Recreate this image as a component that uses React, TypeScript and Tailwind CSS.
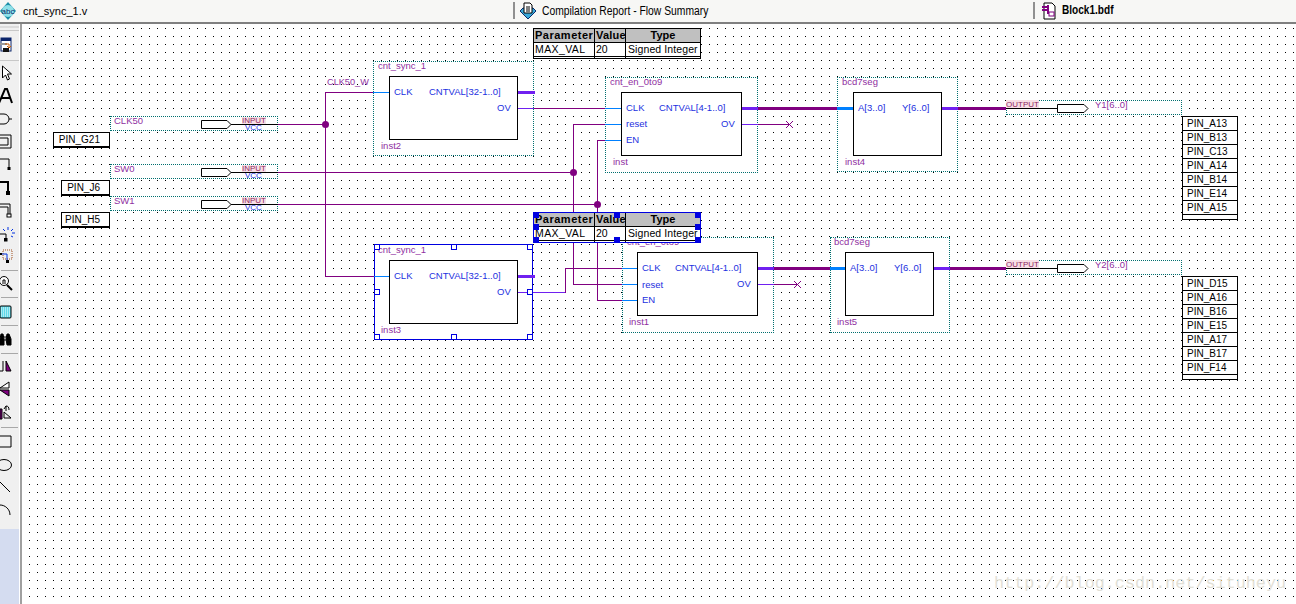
import type { ReactNode } from "react";

const PURPLE = "#800080";
const BLUE = "#0080ff";
const VIOLET = "#7020f0";

const labelClass = "absolute whitespace-nowrap text-[9.5px] leading-[12px] text-[#8f2f9f]";
const portClass = "absolute whitespace-nowrap text-[9.5px] leading-[12px] text-[#1c30e0]";

function Hline({ x1, x2, y, color = PURPLE, w = 1 }: { x1: number; x2: number; y: number; color?: string; w?: number }) {
  return <line x1={x1} x2={x2} y1={y + 0.5} y2={y + 0.5} stroke={color} strokeWidth={w} />;
}

function Vline({ x, y1, y2, color = PURPLE }: { x: number; y1: number; y2: number; color?: string }) {
  return <line x1={x + 0.5} x2={x + 0.5} y1={y1} y2={y2} stroke={color} strokeWidth={1} />;
}

function PinShape({ x, y, w = 30 }: { x: number; y: number; w?: number }) {
  return (
    <polygon
      points={`${x + 0.5},${y + 0.5} ${x + w - 4},${y + 0.5} ${x + w},${y + 4.5} ${x + w - 4},${y + 8.5} ${x + 0.5},${y + 8.5}`}
      fill="#fff"
      stroke="#000"
    />
  );
}

function Cross({ x, y }: { x: number; y: number }) {
  return <path d={`M${x - 3} ${y - 3}L${x + 4} ${y + 4}M${x + 4} ${y - 3}L${x - 3} ${y + 4}`} stroke={PURPLE} fill="none" />;
}

function PinBox({ className, name }: { className: string; name: string }) {
  return (
    <div className={`absolute box-border h-[16px] border border-b-2 border-black bg-white pr-[9px] text-right text-[10px] leading-[13px] text-black ${className}`}>
      {name}
    </div>
  );
}

function PinList({ className, pins }: { className: string; pins: string[] }) {
  return (
    <div className={`absolute flex w-[56px] flex-col border-x border-t border-black bg-white ${className}`}>
      {pins.map((p) => (
        <div key={p} className="h-[14px] border-b border-black pl-[4px] text-[10px] leading-[13px] text-black">
          {p}
        </div>
      ))}
      <div className="h-[5px] border-b border-black" />
    </div>
  );
}

function ParamTable({ className, selected, children }: { className: string; selected?: boolean; children?: ReactNode }) {
  const line = selected ? "border-[#0000e0]" : "border-black";
  return (
    <div className={`absolute w-[168px] border bg-white text-black ${line} ${className}`}>
      <div className="grid h-[13px] grid-cols-[61px_31px_74px] bg-[#c0c0c0] text-[11px] font-bold leading-[13px]">
        <div className="whitespace-nowrap border-r border-black pl-[1px] tracking-[0.5px]">Parameter</div>
        <div className="whitespace-nowrap border-r border-black pl-[1px] tracking-[0.2px]">Value</div>
        <div className="text-center">Type</div>
      </div>
      <div className="grid h-[14px] grid-cols-[61px_31px_74px] border-t border-black text-[10.5px] leading-[13px]">
        <div className="border-r border-black pl-[1px] tracking-[0.4px]">MAX_VAL</div>
        <div className="border-r border-black pl-[1px]">20</div>
        <div className="relative z-10 whitespace-nowrap pl-[2px] tracking-[0.1px]">Signed Integer</div>
      </div>
      <div className="grid h-[2px] grid-cols-[61px_31px_74px] border-t border-black">
        <div className="border-r border-black" />
        <div className="border-r border-black" />
      </div>
      {children}
    </div>
  );
}

function IoFrame({ className, name, output }: { className: string; name: string; output?: boolean }) {
  return (
    <div className={`absolute h-[15px] border border-dotted border-[#006f6f] bg-white ${className}`}>
      <span className={`absolute top-[-2px] whitespace-nowrap text-[9.5px] leading-[12px] text-[#8f2f9f] ${output ? "left-[88px]" : "left-[3px]"}`}>{name}</span>
      {output ? (
        <span className="absolute left-[-1px] top-[-1px] bg-[#f8dfe6] text-[8px] leading-[9px] text-[#8f1f5f]">OUTPUT</span>
      ) : (
        <>
          <span className="absolute left-[131px] top-[0px] bg-[#f8dfe6] text-[8px] leading-[7px] text-[#8f1f5f]">INPUT</span>
          <span className="absolute left-[134px] top-[7px] text-[8px] leading-[8px] text-[#1c30e0]">VCC</span>
        </>
      )}
    </div>
  );
}

function Handle({ className, solid }: { className: string; solid?: boolean }) {
  return <div className={`absolute h-[6px] w-[6px] border border-[#0000e0] ${solid ? "bg-[#0000e0]" : "bg-white"} ${className}`} />;
}

function ToolRow({ children, h = "h-[23px]" }: { children: ReactNode; h?: string }) {
  return (
    <div className={`flex shrink-0 items-center ${h}`}>
      <svg width="19" height="18" viewBox="0 0 19 18" fill="none" stroke="#000">
        {children}
      </svg>
    </div>
  );
}

function Sep() {
  return <div className="mx-px h-px shrink-0 bg-[#a8a8a8]" />;
}

function Toolbar() {
  return (
    <div className="flex w-[19px] shrink-0 flex-col bg-[#f0f0f0]">
      <div className="flex h-[12px] shrink-0 flex-col gap-[2px] pt-[2px]">
        <div className="h-[2px] bg-[#dcdcdc]" />
        <div className="h-[1px] bg-[#c8c8c8]" />
      </div>
      <ToolRow h="h-[17px]">
        <rect x="1" y="2" width="10" height="13" fill="#fff" stroke="#0a246a" />
        <rect x="1" y="2" width="10" height="3" fill="#0a246a" stroke="none" />
        <path d="M0 8h7" stroke="#9a9a9a" strokeWidth="2" />
        <path d="M5 8h4v3M7 10l2 2 2-2" stroke="#c85a00" />
        <rect x="3" y="12" width="6" height="4" fill="#111" stroke="none" />
      </ToolRow>
      <div className="h-[7px] shrink-0" />
      <div className="h-px shrink-0 bg-[#c8c8c8]" />
      <ToolRow>
        <path d="M2.5 2v12l3-3 2 5 2-1-2-5h4z" fill="#fff" />
      </ToolRow>
      <ToolRow>
        <path d="M-1 16L5 2h2l5 14M1 11h9" strokeWidth="2" />
      </ToolRow>
      <ToolRow>
        <path d="M0 4h4a5 5 0 0 1 0 10H0M9 9h3" />
      </ToolRow>
      <ToolRow>
        <path d="M0 2h11v13H0M0 5h8v7H0" />
      </ToolRow>
      <ToolRow>
        <path d="M0 3h9v9" />
        <rect x="7.5" y="11" width="3" height="3" fill="#000" stroke="none" />
      </ToolRow>
      <ToolRow>
        <path d="M0 3h8v10" strokeWidth="2" />
        <rect x="6" y="12" width="4" height="4" fill="#000" stroke="none" />
      </ToolRow>
      <ToolRow>
        <path d="M0 2h10v11H8V5H0" fill="none" />
        <rect x="7" y="12" width="4" height="3" fill="#fff" />
      </ToolRow>
      <ToolRow>
        <path d="M3 4l2 2M8 2v3M13 4l-2 2M12 8h3M11 11l2 1" stroke="#0030e0" />
        <path d="M0 9h6v5" />
        <rect x="4" y="13" width="3.5" height="3.5" fill="#000" stroke="none" />
      </ToolRow>
      <ToolRow>
        <rect x="3" y="2" width="9" height="9" stroke="#a05020" strokeDasharray="1 1" />
        <path d="M0 6h7v6" stroke="#0030e0" />
        <rect x="0" y="5" width="2" height="2" fill="#000" stroke="none" />
        <rect x="6" y="12" width="3" height="3" fill="#000" stroke="none" />
      </ToolRow>
      <div className="h-[2px] shrink-0" />
      <Sep />
      <ToolRow h="h-[26px]">
        <circle cx="4" cy="6" r="4.5" fill="#fff" />
        <path d="M2 6h4M4 4v2M2 8h4" />
        <path d="M7 10l5 5" strokeWidth="2" />
      </ToolRow>
      <Sep />
      <ToolRow h="h-[27px]">
        <rect x="0" y="3" width="11" height="12" rx="1" fill="#5fd8e8" />
        <path d="M1 5h9M1 7h9M1 9h9M1 11h9M1 13h9" stroke="#fff" strokeDasharray="1 1" />
      </ToolRow>
      <Sep />
      <ToolRow h="h-[27px]">
        <path d="M0 8l1-5h2l1 5v6H0zM6 8l1-5h2l2 5v6H7zM4 6h2M4 9h2" fill="#000" />
      </ToolRow>
      <Sep />
      <ToolRow>
        <path d="M3 4v10H0" />
        <path d="M6 4v10h5z" fill="#800080" stroke="#000" />
      </ToolRow>
      <ToolRow>
        <path d="M9 2v6H0z" fill="#fff" />
        <path d="M0 10h9v6z" fill="#800080" />
      </ToolRow>
      <ToolRow>
        <path d="M0 6h2v10H0z" fill="#800080" />
        <path d="M4 9v6h7zM4 6l2-3v5M6 3c2 0 3 1 3 4" />
      </ToolRow>
      <div className="h-[4px] shrink-0" />
      <Sep />
      <ToolRow h="h-[25px]">
        <path d="M0 4h11v11H0" />
      </ToolRow>
      <ToolRow h="h-[23px]">
        <ellipse cx="4" cy="9" rx="7.5" ry="5.5" />
      </ToolRow>
      <ToolRow h="h-[23px]">
        <path d="M0 3l10 10" />
      </ToolRow>
      <ToolRow h="h-[22px]">
        <path d="M0 4c5 0 10 4 10 10" />
      </ToolRow>
      <div className="flex-1" />
      <div className="h-[75px] shrink-0 bg-[#d4dcf0]" />
    </div>
  );
}

function TabBar() {
  return (
    <div className="flex h-[22px] shrink-0 bg-[#f7f7f5] text-black">
      <div className="flex w-[513px] items-center">
        <svg width="18" height="18" viewBox="0 0 18 18" className="ml-[-1px] shrink-0">
          <path d="M9 0l8 9-8 9-8-9z" fill="#1c8fa8" />
          <circle cx="9" cy="9" r="6" fill="#8fe0e8" />
          <text x="9" y="12" textAnchor="middle" fontSize="8" fill="#0a2a6a">abc</text>
        </svg>
        <span className="ml-[6px] text-[11px]">cnt_sync_1.v</span>
      </div>
      <div className="flex w-[520px] items-center">
        <div className="mb-[2px] h-[17px] w-[2px] bg-[#909090]" />
        <svg width="18" height="18" viewBox="0 0 18 18" className="ml-[4px] shrink-0">
          <path d="M9 17L1 9l3-3h10l3 3z" fill="#3aa8d8" stroke="#0a2a6a" />
          <path d="M5 1h6l2 2v8H5z" fill="#fff" stroke="#000" />
          <path d="M7 5h4M7 7h4M7 9h4" stroke="#000" />
        </svg>
        <span className="ml-[5px] origin-left scale-x-[0.86] whitespace-nowrap text-[12px]">Compilation Report - Flow Summary</span>
      </div>
      <div className="flex flex-1 items-center">
        <div className="mb-[2px] h-[17px] w-[2px] bg-[#909090]" />
        <svg width="16" height="18" viewBox="0 0 16 18" className="ml-[6px] shrink-0">
          <path d="M3 1h8l3 3v13H3z" fill="#fff" stroke="#000" />
          <path d="M1 5h6M1 8h6M7 3v8h5" stroke="#800080" strokeWidth="2" fill="none" />
          <rect x="8" y="10" width="5" height="4" fill="#fff" stroke="#800080" />
        </svg>
        <span className="mb-[3px] ml-[5px] origin-left scale-x-[0.84] whitespace-nowrap text-[12px] font-bold">Block1.bdf</span>
      </div>
    </div>
  );
}

function Schematic() {
  return (
    <div className="absolute left-[-23px] top-[-24px] h-[604px] w-[1296px]">
      {/* dot grid */}
      <svg width="1296" height="604" className="absolute left-0 top-0">
        <defs>
          <pattern id="dots" x="5" y="4" width="8" height="8" patternUnits="userSpaceOnUse">
            <rect width="1" height="1" fill="#000" />
          </pattern>
        </defs>
        <rect x="23" y="24" width="1273" height="580" fill="url(#dots)" />
      </svg>

      <div className="absolute left-[994px] top-[572px] whitespace-nowrap text-[16.8px] leading-[24px] text-[#e2e0d6] [font-family:'Liberation_Mono',monospace]">
        http://blog.csdn.net/situheyu
      </div>

      {/* dashed instance frames */}
      <div className="absolute left-[373px] top-[61px] h-[95px] w-[161px] border border-dotted border-[#006f6f] bg-white" />
      <div className="absolute left-[605px] top-[77px] h-[96px] w-[153px] border border-dotted border-[#006f6f] bg-white" />
      <div className="absolute left-[837px] top-[77px] h-[95px] w-[121px] border border-dotted border-[#006f6f] bg-white" />
      <div className="absolute left-[622px] top-[237px] h-[96px] w-[152px] border border-dotted border-[#006f6f] bg-white" />
      <div className="absolute left-[830px] top-[237px] h-[96px] w-[120px] border border-dotted border-[#006f6f] bg-white" />
      <div className="absolute left-[374px] top-[244px] h-[96px] w-[159px] border border-[#0000e0] bg-white" />

      <IoFrame className="left-[110px] top-[116px] w-[168px]" name="CLK50" />
      <IoFrame className="left-[110px] top-[164px] w-[168px]" name="SW0" />
      <IoFrame className="left-[110px] top-[196px] w-[168px]" name="SW1" />
      <IoFrame className="left-[1006px] top-[100px] w-[176px]" name="Y1[6..0]" output />
      <IoFrame className="left-[1006px] top-[260px] w-[176px]" name="Y2[6..0]" output />

      {/* block bodies */}
      <div className="absolute left-[389px] top-[76px] h-[64px] w-[129px] border border-black bg-white" />
      <div className="absolute left-[621px] top-[92px] h-[64px] w-[121px] border border-black bg-white" />
      <div className="absolute left-[853px] top-[92px] h-[64px] w-[89px] border border-black bg-white" />
      <div className="absolute left-[389px] top-[260px] h-[64px] w-[129px] border border-black bg-white" />
      <div className="absolute left-[637px] top-[252px] h-[64px] w-[121px] border border-black bg-white" />
      <div className="absolute left-[845px] top-[252px] h-[64px] w-[89px] border border-black bg-white" />

      {/* wires */}
      <svg width="1296" height="604" className="absolute left-0 top-0" shapeRendering="crispEdges" fill="none">
        <Hline x1={230} x2={278} y={124} color="#000" />
        <Hline x1={230} x2={278} y={172} color="#000" />
        <Hline x1={230} x2={278} y={204} color="#000" />
        <Hline x1={278} x2={325} y={124} />
        <Hline x1={278} x2={573} y={172} />
        <Hline x1={278} x2={597} y={204} />
        <Vline x={325} y1={92} y2={276} />
        <Hline x1={325} x2={373} y={92} />
        <Hline x1={325} x2={374} y={276} />
        <Hline x1={373} x2={389} y={92} color={BLUE} />
        <Hline x1={374} x2={389} y={276} color={BLUE} />

        <Hline x1={518} x2={535} y={92} color={VIOLET} w={3} />
        <Hline x1={518} x2={535} y={276} color={VIOLET} w={3} />
        <Hline x1={518} x2={534} y={108} color={VIOLET} />
        <Hline x1={534} x2={605} y={108} />
        <Hline x1={605} x2={621} y={108} color={BLUE} />
        <Hline x1={518} x2={566} y={292} color={VIOLET} />
        <Vline x={565} y1={268} y2={293} />
        <Hline x1={565} x2={622} y={268} />
        <Hline x1={622} x2={637} y={268} color={BLUE} />

        <Vline x={573} y1={124} y2={285} />
        <Hline x1={573} x2={605} y={124} />
        <Hline x1={605} x2={621} y={124} color={BLUE} />
        <Hline x1={573} x2={622} y={284} />
        <Hline x1={622} x2={637} y={284} color={BLUE} />
        <Vline x={597} y1={140} y2={301} />
        <Hline x1={597} x2={605} y={140} />
        <Hline x1={605} x2={621} y={140} color={BLUE} />
        <Hline x1={597} x2={622} y={300} />
        <Hline x1={622} x2={637} y={300} color={BLUE} />

        <Hline x1={742} x2={758} y={108} color={VIOLET} w={3} />
        <Hline x1={758} x2={837} y={108} w={3} />
        <Hline x1={837} x2={853} y={108} color={BLUE} w={3} />
        <Hline x1={942} x2={958} y={108} color={VIOLET} w={3} />
        <Hline x1={958} x2={1006} y={108} w={3} />
        <Hline x1={1006} x2={1058} y={108} color="#000" />

        <Hline x1={758} x2={774} y={268} color={VIOLET} w={3} />
        <Hline x1={774} x2={830} y={268} w={3} />
        <Hline x1={830} x2={845} y={268} color={BLUE} w={3} />
        <Hline x1={934} x2={950} y={268} color={VIOLET} w={3} />
        <Hline x1={950} x2={1006} y={268} w={3} />
        <Hline x1={1006} x2={1058} y={268} color="#000" />

        <Hline x1={742} x2={758} y={124} color={VIOLET} />
        <Hline x1={758} x2={789} y={124} />
        <Hline x1={758} x2={774} y={284} color={VIOLET} />
        <Hline x1={774} x2={797} y={284} />
      </svg>

      <svg width="1296" height="604" className="absolute left-0 top-0" fill="none">
        <circle cx="325.5" cy="124.5" r="3.5" fill={PURPLE} />
        <circle cx="573.5" cy="172.5" r="3.5" fill={PURPLE} />
        <circle cx="597.5" cy="204.5" r="3.5" fill={PURPLE} />
        <Cross x={789} y={124} />
        <Cross x={797} y={284} />
        <PinShape x={201} y={120} />
        <PinShape x={201} y={168} />
        <PinShape x={201} y={200} />
        <PinShape x={1057} y={104} w={31} />
        <PinShape x={1057} y={264} w={31} />
      </svg>

      <span className={`${labelClass} left-[327px] top-[76px] !text-[9.2px]`}>CLK50_W</span>

      <span className={`${labelClass} left-[378px] top-[60px]`}>cnt_sync_1</span>
      <span className={`${labelClass} left-[381px] top-[140px]`}>inst2</span>
      <span className={`${portClass} left-[394px] top-[86px]`}>CLK</span>
      <span className={`${portClass} left-[429px] top-[86px]`}>CNTVAL[32-1..0]</span>
      <span className={`${portClass} left-[497px] top-[102px]`}>OV</span>

      <span className={`${labelClass} left-[610px] top-[76px]`}>cnt_en_0to9</span>
      <span className={`${labelClass} left-[613px] top-[156px]`}>inst</span>
      <span className={`${portClass} left-[626px] top-[102px]`}>CLK</span>
      <span className={`${portClass} left-[626px] top-[118px]`}>reset</span>
      <span className={`${portClass} left-[626px] top-[134px]`}>EN</span>
      <span className={`${portClass} left-[659px] top-[102px]`}>CNTVAL[4-1..0]</span>
      <span className={`${portClass} left-[721px] top-[118px]`}>OV</span>

      <span className={`${labelClass} left-[842px] top-[76px]`}>bcd7seg</span>
      <span className={`${labelClass} left-[845px] top-[156px]`}>inst4</span>
      <span className={`${portClass} left-[858px] top-[102px]`}>A[3..0]</span>
      <span className={`${portClass} left-[902px] top-[102px]`}>Y[6..0]</span>

      <span className={`${labelClass} left-[378px] top-[244px]`}>cnt_sync_1</span>
      <span className={`${labelClass} left-[381px] top-[324px]`}>inst3</span>
      <span className={`${portClass} left-[394px] top-[270px]`}>CLK</span>
      <span className={`${portClass} left-[429px] top-[270px]`}>CNTVAL[32-1..0]</span>
      <span className={`${portClass} left-[497px] top-[286px]`}>OV</span>

      <span className={`${labelClass} left-[627px] top-[236px]`}>cnt_en_0to9</span>
      <span className={`${labelClass} left-[629px] top-[316px]`}>inst1</span>
      <span className={`${portClass} left-[642px] top-[262px]`}>CLK</span>
      <span className={`${portClass} left-[642px] top-[279px]`}>reset</span>
      <span className={`${portClass} left-[642px] top-[294px]`}>EN</span>
      <span className={`${portClass} left-[675px] top-[262px]`}>CNTVAL[4-1..0]</span>
      <span className={`${portClass} left-[737px] top-[278px]`}>OV</span>

      <span className={`${labelClass} left-[834px] top-[236px]`}>bcd7seg</span>
      <span className={`${labelClass} left-[837px] top-[316px]`}>inst5</span>
      <span className={`${portClass} left-[850px] top-[262px]`}>A[3..0]</span>
      <span className={`${portClass} left-[894px] top-[262px]`}>Y[6..0]</span>

      {/* selection handles of the lower sync block */}
      <Handle className="left-[374px] top-[244px]" />
      <Handle className="left-[451px] top-[244px]" />
      <Handle className="left-[527px] top-[244px]" />
      <Handle className="left-[374px] top-[289px]" />
      <Handle className="left-[527px] top-[289px]" />
      <Handle className="left-[374px] top-[334px]" />
      <Handle className="left-[451px] top-[334px]" />
      <Handle className="left-[527px] top-[334px]" />

      <ParamTable className="left-[533px] top-[28px]" />
      <ParamTable className="left-[533px] top-[212px]" selected>
        <Handle solid className="left-[-1px] top-[-1px]" />
        <Handle solid className="left-[80px] top-[-1px]" />
        <Handle solid className="right-[-1px] top-[-1px]" />
        <Handle solid className="left-[-1px] top-[11px]" />
        <Handle solid className="right-[-1px] top-[11px]" />
        <Handle solid className="bottom-[-1px] left-[-1px]" />
        <Handle solid className="bottom-[-1px] left-[80px]" />
        <Handle solid className="bottom-[-1px] right-[-1px]" />
      </ParamTable>

      <PinBox className="left-[53px] top-[132px] w-[57px]" name="PIN_G21" />
      <PinBox className="left-[61px] top-[180px] w-[49px]" name="PIN_J6" />
      <PinBox className="left-[61px] top-[212px] w-[49px]" name="PIN_H5" />

      <PinList className="left-[1182px] top-[116px]" pins={["PIN_A13", "PIN_B13", "PIN_C13", "PIN_A14", "PIN_B14", "PIN_E14", "PIN_A15"]} />
      <PinList className="left-[1182px] top-[276px]" pins={["PIN_D15", "PIN_A16", "PIN_B16", "PIN_E15", "PIN_A17", "PIN_B17", "PIN_F14"]} />
    </div>
  );
}

export default function App() {
  return (
    <div className="flex h-[604px] w-[1296px] flex-col overflow-hidden bg-white [font-family:'Liberation_Sans',Arial,sans-serif]">
      <TabBar />
      <div className="h-[2px] shrink-0 bg-[#808080]" />
      <div className="flex min-h-0 flex-1">
        <Toolbar />
        <div className="w-px shrink-0 bg-white" />
        <div className="w-[2px] shrink-0 bg-[#a0a0a0]" />
        <div className="w-px shrink-0 bg-white" />
        <div className="relative min-w-0 flex-1 overflow-hidden">
          <Schematic />
        </div>
      </div>
    </div>
  );
}
